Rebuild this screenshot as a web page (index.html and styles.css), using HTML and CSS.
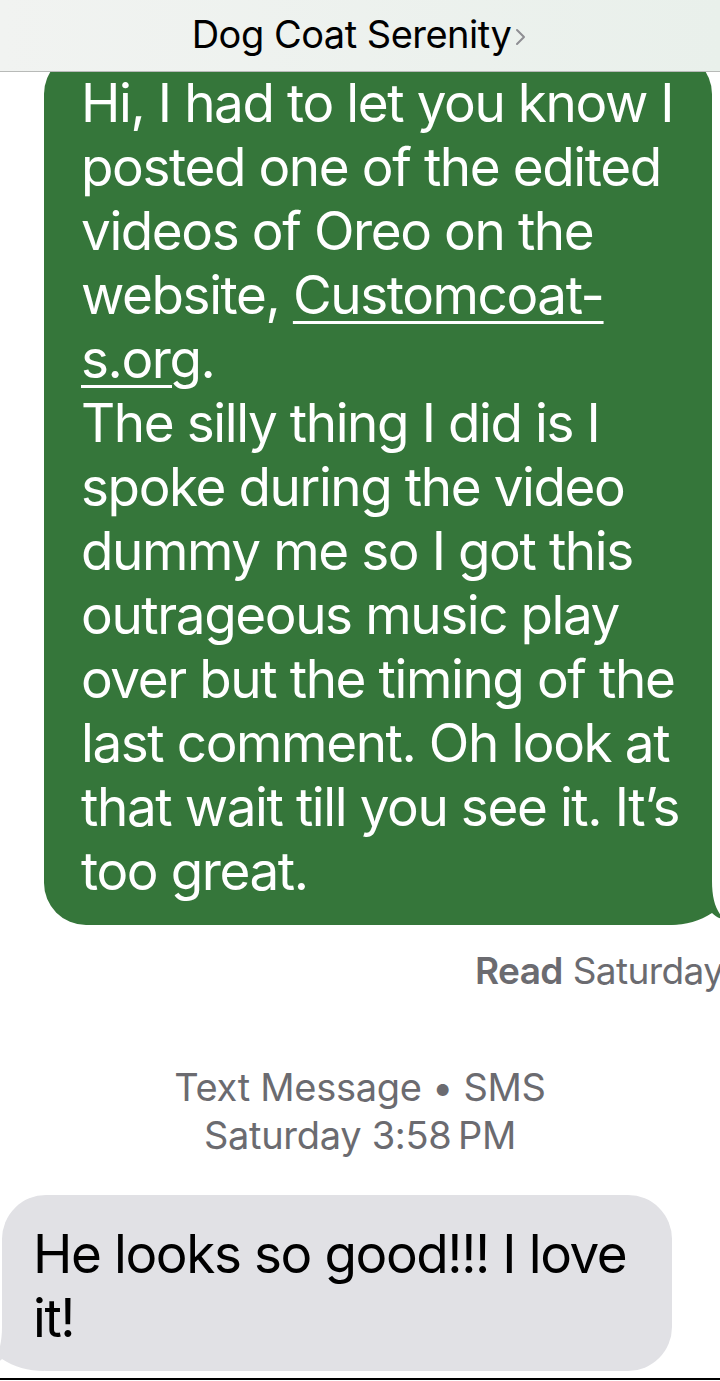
FILE: index.html
```html
<!DOCTYPE html>
<html lang="en">
<head>
  <meta charset="UTF-8" />
  <meta name="viewport" content="width=device-width, initial-scale=1.0" />
  <title>Dog Coat Serenity</title>
  <link rel="stylesheet" href="styles.css">
</head>
<body>
  <header class="topbar">
    <span class="contact">Dog Coat Serenity</span>
    <svg class="chevron" width="14" height="22" viewBox="0 0 14 22">
      <polyline points="3,4 10,11 3,18" fill="none" stroke="#8e8e93" stroke-width="2" stroke-linecap="round" stroke-linejoin="round"/>
    </svg>
  </header>

  <main class="thread">
    <!-- sent message -->
    <div class="bubble sent">
      <svg class="tail tail-right" width="54" height="44" viewBox="0 0 54 44">
        <path d="M0 44 C16 44 30 40 42 32 C46 36 50 38 54 38 C46 30 42 18 42 0 L0 0 Z" fill="#35763a"/>
      </svg>
      <span class="text">Hi, I had to let you know I<br>
      posted one of the edited<br>
      videos of Oreo on the<br>
      website, <span class="link">Customcoat-</span><br>
      <span class="link">s.org</span>.<br>
      The silly thing I did is I<br>
      spoke during the video<br>
      dummy me so I got this<br>
      outrageous music play<br>
      over but the timing of the<br>
      last comment. Oh look at<br>
      that wait till you see it. It’s<br>
      too great.</span>
    </div>
    <div class="receipt"><b>Read</b> Saturday</div>

    <div class="stamp">
      <div>Text Message • SMS</div>
      <div>Saturday 3:58&#8239;PM</div>
    </div>

    <!-- received message -->
    <div class="bubble received">
      <svg class="tail tail-left" width="54" height="44" viewBox="0 0 54 44">
        <path d="M0 44 C16 44 30 40 42 32 C46 36 50 38 54 38 C46 30 42 18 42 0 L0 0 Z" fill="#e1e1e5"/>
      </svg>
      <span class="text">He looks so good!!! I love<br>
      it!</span>
    </div>
  </main>

  <div class="bottom-line"></div>
</body>
</html>
```

FILE: styles.css
```css
/* Base */
* { box-sizing: border-box; margin: 0; padding: 0; }
body {
  font-family: "Inter", "Roboto", sans-serif;
  background: #fff;
  color: #000;
  width: 720px;
  height: 1381px;
  overflow: hidden;
}

/* Header bar with contact name */
.topbar {
  position: relative;
  z-index: 2;
  height: 72px;
  display: flex;
  align-items: center;
  justify-content: center;
  gap: 3px;
  background: linear-gradient(90deg, #f1f3f1 0%, #e9f0eb 100%);
  border-bottom: 1px solid #b8bab8;
  padding-bottom: 4px;
}
.contact {
  font-size: 38px;
  letter-spacing: -0.5px;
  color: #000;
}
.chevron { margin-top: 6px; }

/* Conversation */
.thread {
  display: flex;
  flex-direction: column;
}
.bubble {
  position: relative;
  font-size: 53px;
  line-height: 64px;
  white-space: nowrap;
  letter-spacing: -1.4px;
}
.bubble .text { position: relative; }
.bubble.sent {
  margin-top: -20px;
  margin-left: 44px;
  width: 668px;
  padding: 19px 0 22px 37px;
  background: #35763a;
  color: #fff;
  border-radius: 42px;
}
.link {
  text-decoration: underline;
  text-decoration-thickness: 3px;
  text-underline-offset: 7px;
}
.tail {
  position: absolute;
  bottom: 0;
}
.tail-right { right: -12px; }
.tail-left { left: -12px; transform: scaleX(-1); }

.receipt {
  margin-top: 23px;
  padding-left: 475px;
  font-size: 37px;
  line-height: 46px;
  color: #6b6b70;
  white-space: nowrap;
  letter-spacing: -0.6px;
}
.receipt b { font-weight: 600; }

.stamp {
  margin-top: 69px;
  text-align: center;
  font-size: 38px;
  line-height: 48px;
  color: #6b6b70;
  letter-spacing: -0.3px;
}

.bubble.received {
  margin-top: 36px;
  margin-left: 2px;
  width: 670px;
  padding: 27px 0 21px 31px;
  background: #e1e1e5;
  color: #000;
  border-radius: 44px;
}

.bottom-line {
  margin-top: 7px;
  height: 2px;
  background: #000;
}
```
